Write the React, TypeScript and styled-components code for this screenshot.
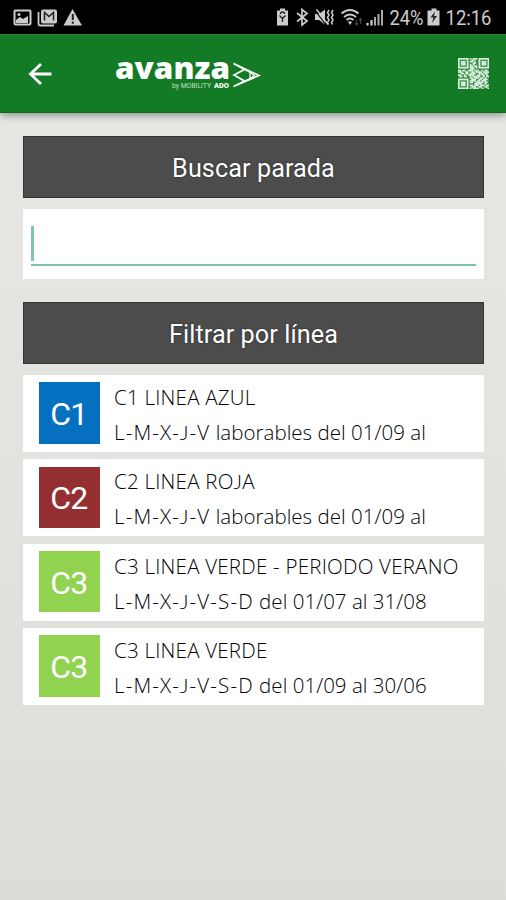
import React from 'react';
import styled, { createGlobalStyle } from 'styled-components';

const Global = createGlobalStyle`
  * { box-sizing: border-box; }
  body { margin: 0; background: #e2e2de; }
`;

const Screen = styled.div`
  width: 506px;
  height: 900px;
  overflow: hidden;
  display: flex;
  flex-direction: column;
  background: linear-gradient(#e6e6e3 110px, #e2e2de 500px, #dddcd8 900px);
  font-family: Roboto, sans-serif;
`;

const StatusBar = styled.div`
  height: 34px;
  flex: none;
  background: #000;
  display: flex;
  justify-content: space-between;
`;

const StatusIcons = styled.svg`
  display: block;
  flex: none;
`;

const AppBar = styled.header`
  height: 79px;
  flex: none;
  display: flex;
  align-items: center;
  background: #137b25;
  border-top: 1px solid #2f8240;
  border-bottom: 1px solid #0c6a1b;
  box-shadow: 0 2px 8px rgba(0, 0, 0, 0.4);
  padding: 0 17px 0 26px;
`;

const Logo = styled.svg`
  margin-left: 60px;
  margin-right: auto;
  overflow: visible;
`;

const Content = styled.main`
  display: flex;
  flex-direction: column;
  padding: 22.5px 22px 0 23px;
`;

const Heading = styled.div`
  height: 62.5px;
  display: flex;
  align-items: center;
  justify-content: center;
  background: #4c4c4c;
  border: 1px solid #333;
  color: #fff;
  font-size: 25.2px;
  letter-spacing: 0.08px;
  padding-top: 3px;
  text-shadow: 0 0 2px #222;
`;

const SearchCard = styled.div`
  height: 69.5px;
  margin: 11px 0 23px;
  padding: 17px 8px 12px;
  background: #fff;
`;

const SearchField = styled.div`
  height: 40px;
  border-bottom: 2.5px solid #7dc1b1;
`;

const Caret = styled.div`
  width: 2.5px;
  height: 35px;
  background: #80c4b5;
`;

const LineList = styled.div`
  display: flex;
  flex-direction: column;
  gap: 7.3px;
  margin-top: 11px;
`;

const LineRow = styled.div`
  height: 77px;
  display: flex;
  align-items: center;
  gap: 14px;
  padding: 0 0 1px 15.5px;
  background: #fff;
`;

const Badge = styled.div<{ $color: string }>`
  width: 61.5px;
  height: 61.5px;
  flex: none;
  display: flex;
  align-items: center;
  justify-content: center;
  padding-top: 2px;
  padding-right: 1px;
  background: ${(p) => p.$color};
  color: #fff;
  font-size: 32px;
  letter-spacing: -1px;
`;

const LineText = styled.div`
  display: flex;
  flex-direction: column;
  padding-top: 4px;
  font-family: 'Open Sans', 'Noto Sans', sans-serif;
  font-weight: 300;
  font-size: 20.5px;
  font-kerning: none;
  line-height: 35px;
  color: #000;
  white-space: nowrap;
`;

const LineName = styled.div`
  height: 35px;
  letter-spacing: 0.23px;
`;

const LineDays = styled.div`
  height: 35px;
  letter-spacing: 0.03px;
`;

const Weekdays = styled.span`
  letter-spacing: 1.15px;
`;

const ShortJ = styled.span`
  font-family: Lato, sans-serif;
  line-height: 1;
`;

/* Sets each J in a face whose J stands on the baseline. */
const Label = ({ text }: { text: string }) => (
  <>
    {text.split('J').map((part, i) => (
      <React.Fragment key={i}>
        {i > 0 && <ShortJ>J</ShortJ>}
        {part}
      </React.Fragment>
    ))}
  </>
);

const QR_MODULES = [
  '111111101011101111111',
  '100000100110001000001',
  '101110101101001011101',
  '101110100011001011101',
  '101110101010001011101',
  '100000101101101000001',
  '111111101110101111111',
  '000000001110000000000',
  '110110011101110010110',
  '111001100110111101111',
  '001101101111001110110',
  '110010011110011011010',
  '011011001011111001011',
  '000000001101110110100',
  '111111100111001101110',
  '100000101111011011100',
  '101110101100111110110',
  '101110100001111100100',
  '101110101101110111011',
  '100000100111001100110',
  '111111101011110010001',
];

const QrCode = () => (
  <svg width="31" height="31" viewBox="0 0 21 21">
    <rect width="21" height="21" fill="#38904a" />
    {QR_MODULES.map((row, y) =>
      row.split('').map((m, x) => (m === '1' ? <rect key={`${x}-${y}`} x={x} y={y} width="1.08" height="1.08" fill="#e9f5ea" /> : null))
    )}
  </svg>
);

const lines = [
  { code: 'C1', color: '#0570c0', name: 'C1 LINEA AZUL', week: 'L-M-X-J-V', days: ' laborables del 01/09 al' },
  { code: 'C2', color: '#943031', name: 'C2 LINEA ROJA', week: 'L-M-X-J-V', days: ' laborables del 01/09 al' },
  { code: 'C3', color: '#91d250', name: 'C3 LINEA VERDE - PERIODO VERANO', week: 'L-M-X-J-V-S-D', days: ' del 01/07 al 31/08' },
  { code: 'C3', color: '#91d250', name: 'C3 LINEA VERDE', week: 'L-M-X-J-V-S-D', days: ' del 01/09 al 30/06' },
];

const NotificationIcons = () => (
  <StatusIcons width="90" height="34" fill="none" stroke="#ccc">
    <rect x="14.5" y="10.5" width="16" height="14" rx="1" strokeWidth="2" />
    <path d="M16 23v-3l4-3 3 2 5-3v7z" fill="#ccc" stroke="none" />
    <circle cx="19" cy="14.5" r="1.5" fill="#ccc" stroke="none" />
    <path d="M38.5 12v12q0 1.5 1.5 1.5h14" strokeWidth="1.8" />
    <rect x="41" y="9.5" width="16" height="14" rx="2" fill="#ccc" stroke="none" />
    <path d="M44.5 20.5v-8l4.5 4 4.5-4v8" stroke="#222" strokeWidth="1.5" />
    <path d="M72.5 9 82 25.5H63.5z" fill="#ccc" stroke="none" />
    <path d="M72.8 14v6M72.8 21.5v2.2" stroke="#222" strokeWidth="2" />
  </StatusIcons>
);

const SystemIcons = () => (
  <StatusIcons width="236" height="34" fill="none" stroke="#ccc">
    <path d="M10 8.5h5v2h3v15H7v-15h3z" fill="#ccc" stroke="none" />
    <path d="M12.5 22v-5M9.5 15.5l3 3 3-3M10.5 14a2 2 0 0 1 4 0" stroke="#222" strokeWidth="1.3" />
    <path d="M27 13l10 8-5 4V9.5l5 4-10 8" strokeWidth="1.7" />
    <path d="M45 14h4l6-4.5v15L49 20h-4z" fill="#ccc" stroke="none" />
    <path d="M46.5 9.5 58 24.5" strokeWidth="1.5" />
    <path d="M45 10.5 56.5 25.5" stroke="#000" strokeWidth="1.2" />
    <path d="M59 10l-1.5 2.5 1.5 2.5-1.5 2.5 1.5 2.5-1.5 2.5 1 2M63 10l-1.5 2.5 1.5 2.5-1.5 2.5 1.5 2.5-1.5 2.5 1 2" strokeWidth="1.5" />
    <path d="M71.5 13.5q8.5-7 17 0M74 17q6-5 12 0M76.5 20q3.5-3 7 0" strokeWidth="1.9" />
    <path d="M78 22q2-1.5 4 0l-2 3z" fill="#ccc" stroke="none" />
    <path d="M86.5 20v5M90.5 19v5M85 23l1.5 2 1.5-2M89 20.5l1.5-2 1.5 2" stroke="#444" strokeWidth="1.2" />
    <path d="M97.5 23v2.5M101.5 20v5.5" strokeWidth="2.2" />
    <path d="M105 17v8.5M108.5 14v11.5M112 10v15.5" stroke="#aaa" strokeWidth="2" />
    <text x="119.5" y="25" textLength="34" lengthAdjust="spacingAndGlyphs" fill="#ccc" stroke="none" fontFamily="Roboto" fontSize="20.5">24%</text>
    <path d="M161.5 8.5h5v2h3v15h-12v-15h4z" fill="#ccc" stroke="none" />
    <path d="M165 11.5l-4.5 6h3l-1.5 5.5 5-7h-3z" fill="#222" stroke="none" />
    <text x="175.5" y="25" textLength="46" lengthAdjust="spacingAndGlyphs" fill="#ccc" stroke="none" fontFamily="Roboto" fontSize="20.5">12:16</text>
  </StatusIcons>
);

export default function App() {
  return (
    <Screen>
      <Global />
      <StatusBar>
        <NotificationIcons />
        <SystemIcons />
      </StatusBar>
      <AppBar>
        <svg width="28" height="28" fill="none" stroke="#fff" strokeWidth="2.8">
          <path d="M25.5 14H5M15 4 4.5 14 15 24" />
        </svg>
        <Logo width="150" height="40">
          <g fill="#fff">
            <text x="1" y="25" textLength="115" lengthAdjust="spacingAndGlyphs" fontFamily="'Open Sans'" fontWeight="800" fontSize="30">avanza</text>
            <text x="58" y="33.5" textLength="39" lengthAdjust="spacingAndGlyphs" fontFamily="Roboto" fontSize="6.5" fillOpacity=".75">by MOBILITY</text>
            <text x="100" y="33.5" textLength="15" lengthAdjust="spacingAndGlyphs" fontFamily="Roboto" fontWeight="900" fontSize="6.5">ADO</text>
          </g>
          <path d="M119.5 9.5 145 21.5 119.5 32.5 130.5 27 120 21 130.5 15.5z" fill="none" stroke="#fff" strokeWidth="1.7" />
          <path d="M130.5 15.5 136 18.5v6L130.5 27M136 18.5l4.5 3-4.5 3" fill="none" stroke="#fff" strokeWidth="1.2" />
        </Logo>
        <QrCode />
      </AppBar>
      <Content>
        <Heading>Buscar parada</Heading>
        <SearchCard>
          <SearchField>
            <Caret />
          </SearchField>
        </SearchCard>
        <Heading>Filtrar por línea</Heading>
        <LineList>
          {lines.map((l) => (
            <LineRow key={l.name}>
              <Badge $color={l.color}>{l.code}</Badge>
              <LineText>
                <LineName><Label text={l.name} /></LineName>
                <LineDays>
                  <Weekdays><Label text={l.week} /></Weekdays>
                  {l.days}
                </LineDays>
              </LineText>
            </LineRow>
          ))}
        </LineList>
      </Content>
    </Screen>
  );
}
